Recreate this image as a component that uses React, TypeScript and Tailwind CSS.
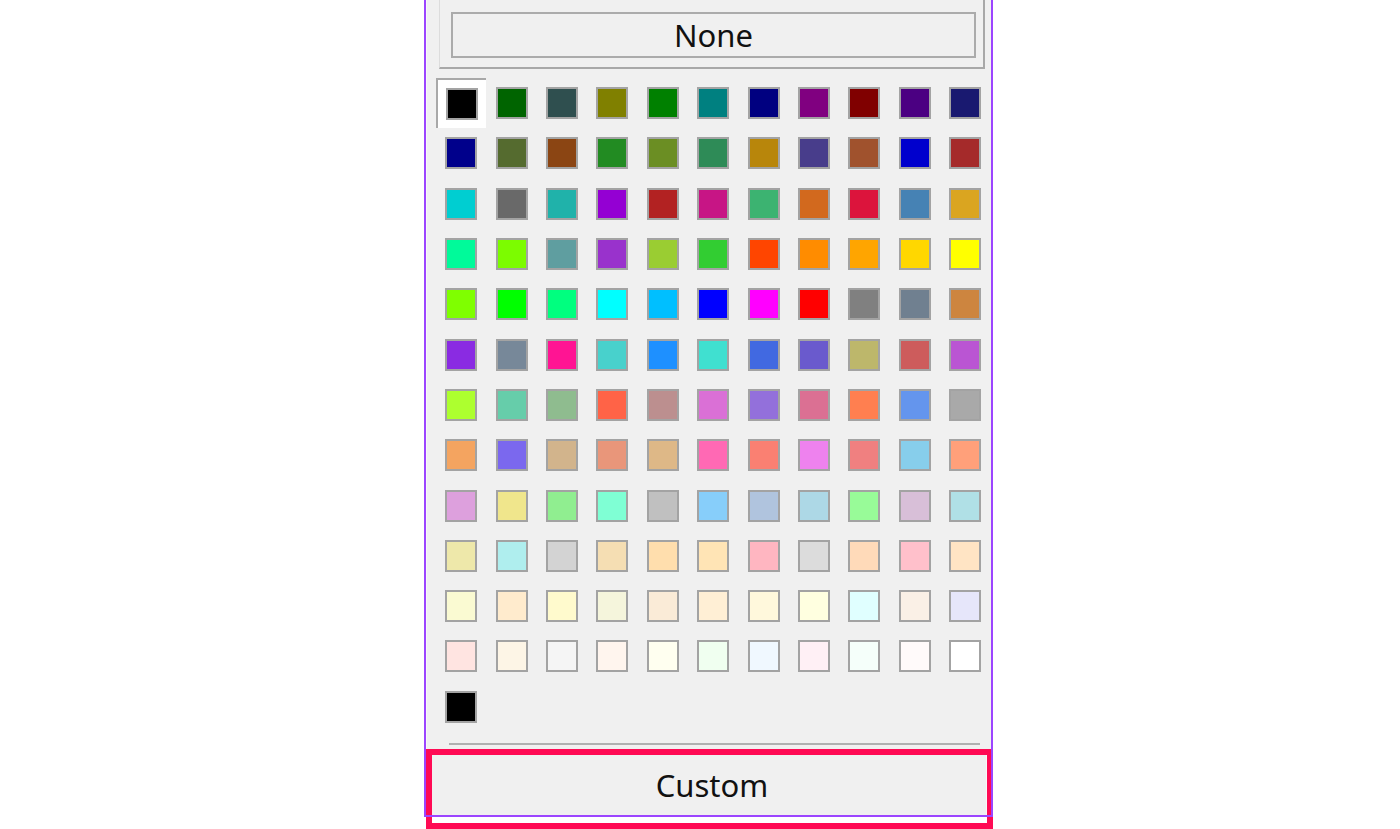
import React, { ReactNode } from "react";

// .NET web colour order, 11 per row
const COLORS: string[] = [
  "#000000", "#006400", "#2f4f4f", "#808000", "#008000", "#008080", "#000080", "#800080", "#800000", "#4b0082", "#191970",
  "#00008b", "#556b2f", "#8b4513", "#228b22", "#6b8e23", "#2e8b57", "#b8860b", "#483d8b", "#a0522d", "#0000cd", "#a52a2a",
  "#00ced1", "#696969", "#20b2aa", "#9400d3", "#b22222", "#c71585", "#3cb371", "#d2691e", "#dc143c", "#4682b4", "#daa520",
  "#00fa9a", "#7cfc00", "#5f9ea0", "#9932cc", "#9acd32", "#32cd32", "#ff4500", "#ff8c00", "#ffa500", "#ffd700", "#ffff00",
  "#7fff00", "#00ff00", "#00ff7f", "#00ffff", "#00bfff", "#0000ff", "#ff00ff", "#ff0000", "#808080", "#708090", "#cd853f",
  "#8a2be2", "#778899", "#ff1493", "#48d1cc", "#1e90ff", "#40e0d0", "#4169e1", "#6a5acd", "#bdb76b", "#cd5c5c", "#ba55d3",
  "#adff2f", "#66cdaa", "#8fbc8f", "#ff6347", "#bc8f8f", "#da70d6", "#9370db", "#db7093", "#ff7f50", "#6495ed", "#a9a9a9",
  "#f4a460", "#7b68ee", "#d2b48c", "#e9967a", "#deb887", "#ff69b4", "#fa8072", "#ee82ee", "#f08080", "#87ceeb", "#ffa07a",
  "#dda0dd", "#f0e68c", "#90ee90", "#7fffd4", "#c0c0c0", "#87cefa", "#b0c4de", "#add8e6", "#98fb98", "#d8bfd8", "#b0e0e6",
  "#eee8aa", "#afeeee", "#d3d3d3", "#f5deb3", "#ffdead", "#ffe4b5", "#ffb6c1", "#dcdcdc", "#ffdab9", "#ffc0cb", "#ffe4c4",
  "#fafad2", "#ffebcd", "#fffacd", "#f5f5dc", "#faebd7", "#ffefd5", "#fff8dc", "#ffffe0", "#e0ffff", "#faf0e6", "#e6e6fa",
  "#ffe4e1", "#fdf5e6", "#f5f5f5", "#fff5ee", "#fffff0", "#f0fff0", "#f0f8ff", "#fff0f5", "#f5fffa", "#fffafa", "#ffffff",
  "#000000",
];

interface SwatchProps {
  color: string;
  selected: boolean;
}

function Swatch({ color, selected }: SwatchProps): ReactNode {
  return (
    <div
      className={
        selected
          ? "flex h-[50.3px] w-[50.4px] items-center justify-center border-t-2 border-l-2 border-[#a8a8a8] bg-white"
          : "flex h-[50.3px] w-[50.4px] items-center justify-center"
      }
    >
      <div
        className="h-[32px] w-[32px] border-2 border-[#a3a3a3]"
        style={{ backgroundColor: color }}
      />
    </div>
  );
}

export default function App(): ReactNode {
  return (
    <div className="min-h-[829px] bg-white font-['Noto_Sans','Open_Sans',sans-serif] text-[31px] text-[#111]">
      <div className="relative ml-[424px] h-[829px] w-[569px]">
        <div className="ml-[2px] flex h-[749px] w-[565px] flex-col border-l border-[#f8f8f8] bg-[#f0f0f0]">
          {/* header with the None button */}
          <div className="ml-[12px] h-[69px] w-[546px] border-r-2 border-b-2 border-l border-r-[#a8a8a8] border-b-[#a8a8a8] border-l-[#dcdcdc] pt-[12px] pl-[11px]">
            <div className="flex h-[46px] w-[525px] items-center justify-center border-2 border-[#ababab] bg-[#f0f0f0] leading-none">
              None
            </div>
          </div>

          <div className="mt-[9px] ml-[9px] grid grid-cols-[repeat(11,50.4px)]">
            {COLORS.map((c, i) => (
              <Swatch key={`${c}-${i}`} color={c} selected={i === 0} />
            ))}
          </div>

          <div className="mt-[11px] ml-[22px] h-[2px] w-[531px] bg-[#b0b0b0]" />
        </div>

        {/* highlighted Custom button */}
        <div className="ml-[2px] h-[80px] w-[567px] border-[6px] border-[#ff0a54] bg-white">
          <div className="flex h-[60px] items-center justify-center border-r border-[#f8f8f8] bg-[#f0f0f0] pl-[6px] leading-none">
            Custom
          </div>
        </div>

        <div className="pointer-events-none absolute top-[-2px] left-0 h-[819px] w-[569px] border-2 border-[#9c45ff]" />
      </div>
    </div>
  );
}
